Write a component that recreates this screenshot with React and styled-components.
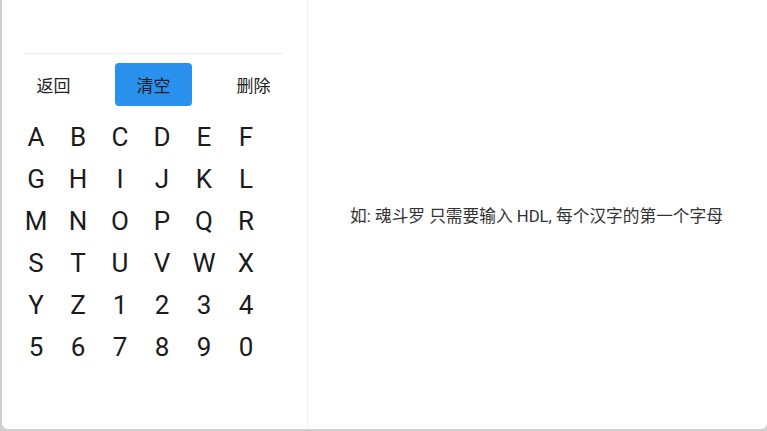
import styled, { createGlobalStyle } from "styled-components";
import { useState } from "react";

const GlobalStyle = createGlobalStyle`
  html, body {
    margin: 0;
    padding: 0;
    background: #cfcfcf;
  }
  * {
    box-sizing: border-box;
  }
`;

const Frame = styled.div`
  width: 767px;
  height: 431px;
  padding: 0 0 2px 2px;
  background: #cfcfcf;
`;

const Dialog = styled.div`
  display: flex;
  height: 100%;
  background: #fff;
  border-radius: 0 0 6px 6px;
  overflow: hidden;
  font-family: Roboto, "Noto Sans CJK SC", sans-serif;
`;

const Keyboard = styled.div`
  width: 306px;
  flex-shrink: 0;
  border-right: 1px solid #f2f2f2;
  padding-top: 53px;
`;

const Divider = styled.div`
  height: 1px;
  margin: 0 24px 0 22px;
  background: #ececec;
`;

const ActionRow = styled.div`
  display: flex;
  gap: 23px;
  padding: 9px 0 0 13px;
`;

const ActionButton = styled.button`
  width: 77px;
  height: 43px;
  border: none;
  border-radius: 4px;
  background: ${(p) => (p.$active ? "#2a92ee" : "transparent")};
  color: ${(p) => (p.$active ? "#1c1c2a" : "#222")};
  font-family: Roboto, "Noto Sans CJK SC", sans-serif;
  font-size: 17px;
  cursor: pointer;
`;

const KeyGrid = styled.div`
  display: grid;
  grid-template-columns: repeat(6, 42px);
  grid-auto-rows: 42px;
  padding: 10px 0 0 13px;
`;

const Key = styled.button`
  border: none;
  background: transparent;
  padding: 0;
  font-family: Roboto, "Noto Sans", sans-serif;
  font-size: 26px;
  color: #1b1b1b;
  cursor: pointer;
`;

const Hint = styled.div`
  flex: 1;
  display: flex;
  align-items: center;
  justify-content: center;
  padding-right: 2px;
  font-size: 16.7px;
  color: #333;
`;

const keys = "ABCDEFGHIJKLMNOPQRSTUVWXYZ1234567890".split("");

const App = () => {
  const [input, setInput] = useState("");

  return (
    <Frame>
      <GlobalStyle />
      <Dialog>
        <Keyboard>
          <Divider />
          <ActionRow>
            <ActionButton>返回</ActionButton>
            <ActionButton $active onClick={() => setInput("")}>
              清空
            </ActionButton>
            <ActionButton onClick={() => setInput(input.slice(0, -1))}>
              删除
            </ActionButton>
          </ActionRow>
          <KeyGrid>
            {keys.map((k) => (
              <Key key={k} onClick={() => setInput(input + k)}>
                {k}
              </Key>
            ))}
          </KeyGrid>
        </Keyboard>
        <Hint>{input || "如: 魂斗罗 只需要输入 HDL, 每个汉字的第一个字母"}</Hint>
      </Dialog>
    </Frame>
  );
};

export default App;
